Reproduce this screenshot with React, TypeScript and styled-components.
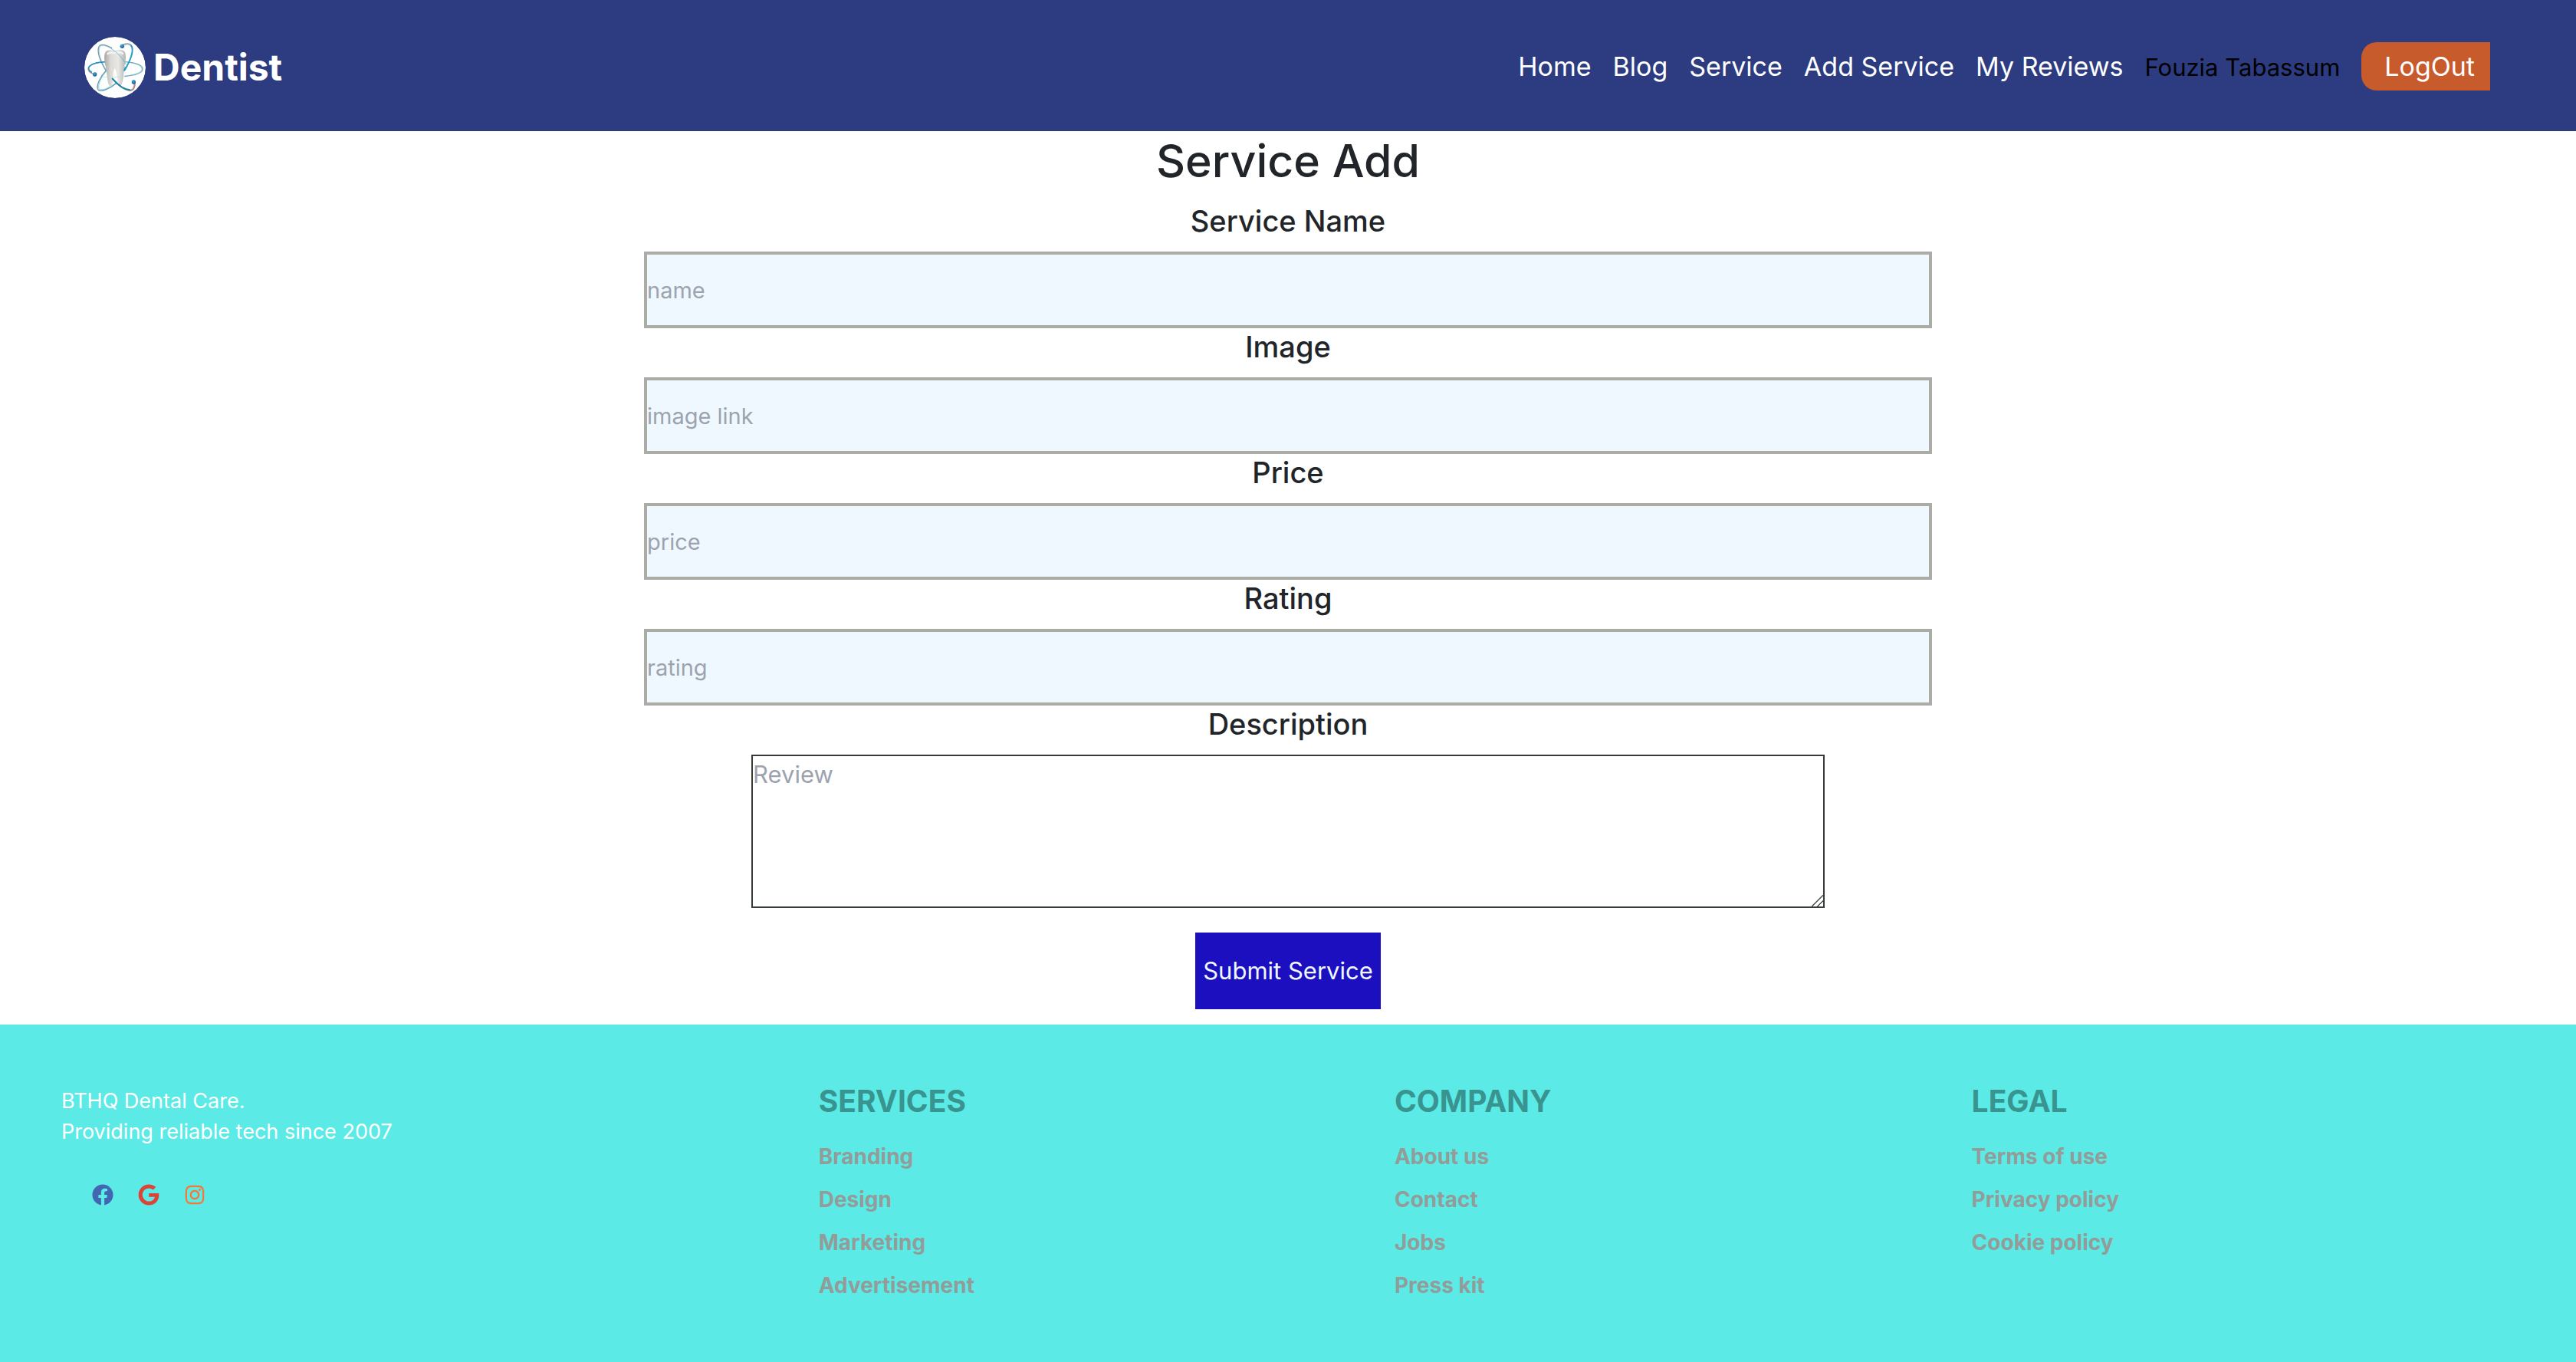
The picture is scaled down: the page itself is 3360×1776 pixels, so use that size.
import React from "react";
import styled, { createGlobalStyle } from "styled-components";
import { FaFacebook, FaGoogle, FaInstagram } from "react-icons/fa";

const GlobalStyle = createGlobalStyle`
  *, *::before, *::after { box-sizing: border-box; }
  body {
    margin: 0;
    background: #fff;
    color: #212529;
    font-family: Inter, "Liberation Sans", sans-serif;
    font-size: 31px;
    line-height: 48px;
  }
  a { color: inherit; text-decoration: none; }
`;

const Header = styled.header`
  display: flex;
  align-items: center;
  justify-content: space-between;
  padding: 44px 112px 43px 110px;
  background: #2d3c80;
  color: #fff;
`;

const Brand = styled.a`
  display: flex;
  align-items: center;
  gap: 10px;
  padding-top: 4px;
  font-size: 48px;
  font-weight: 700;
`;

const LogoMark = styled.svg`
  width: 80px;
  height: 80px;
  border-radius: 50%;
`;

const Nav = styled.nav`
  display: flex;
  align-items: baseline;
  gap: 28px;
  font-size: 34px;
  line-height: 43px;
`;

const UserName = styled.span`
  color: #000;
  font-size: 31px;
`;

const LogoutButton = styled.button`
  padding: 10px 20px 10px 30px;
  border: 0;
  border-radius: 20px 0 0 20px;
  background: #c75b2c;
  color: #fff;
  font: inherit;
`;

const Form = styled.form`
  display: flex;
  flex-direction: column;
  align-items: center;
  width: 50%;
  margin: 0 auto;
  padding-bottom: 20px;
`;

const Title = styled.h1`
  margin: 0 0 16px;
  font-size: 59px;
  line-height: 77px;
  font-weight: 500;
`;

const FieldLabel = styled.label`
  margin-bottom: 16px;
  font-size: 38px;
  line-height: 48px;
  font-weight: 500;
`;

const TextInput = styled.input`
  width: 100%;
  height: 100px;
  padding: 0;
  border: 4px solid #acaca6;
  border-radius: 0;
  background: #f0f8ff;
  color: inherit;
  font: inherit;
  font-size: 29px;
  &::placeholder { color: #9ca3af; opacity: 1; }
`;

const TextArea = styled.textarea`
  width: calc(100% * 5 / 6);
  height: 200px;
  margin-bottom: 32px;
  padding: 0;
  border: 2px solid #363c36;
  background: #fff;
  color: inherit;
  font: inherit;
  resize: both;
  &::placeholder { color: #9ca3af; opacity: 1; }
  &::-webkit-resizer {
    background: linear-gradient(
      135deg,
      transparent 46%,
      #555 48%,
      #555 53%,
      transparent 55%,
      transparent 71%,
      #555 73%,
      #555 78%,
      transparent 80%
    );
  }
`;

const SubmitButton = styled.button`
  height: 100px;
  padding: 0 10px;
  border: 0;
  background: #1c0fc0;
  color: #f0f8ff;
  font: inherit;
`;

const Footer = styled.footer`
  display: grid;
  grid-auto-flow: column;
  column-gap: 32px;
  padding: 80px;
  background: #5ceae7;
  font-size: 28px;
  line-height: 40px;
`;

const About = styled.div`
  padding-right: 8px;
  color: #fff;
`;

const AboutText = styled.p`
  margin: 0;
  font-size: 27px;
`;

const Socials = styled.div`
  display: flex;
  gap: 32px;
  padding: 48px 40px;
`;

const SocialLink = styled.a<{ $color: string }>`
  display: flex;
  justify-content: center;
  width: 28px;
  font-size: 28px;
  color: ${(p) => p.$color};
`;

const LinkColumn = styled.nav`
  display: flex;
  flex-direction: column;
  align-items: flex-start;
  gap: 16px;
  color: #929c98;
  font-weight: 700;
`;

const ColumnTitle = styled.h2`
  margin: 0 0 16px;
  color: #39938f;
  font-size: 39px;
  line-height: 40px;
  font-weight: 700;
`;

const navLinks = ["Home", "Blog", "Service", "Add Service", "My Reviews"];

const fields = [
  { id: "name", label: "Service Name", placeholder: "name" },
  { id: "image", label: "Image", placeholder: "image link" },
  { id: "price", label: "Price", placeholder: "price" },
  { id: "rating", label: "Rating", placeholder: "rating" },
];

const socials = [
  { name: "Facebook", color: "#4267b2", Icon: FaFacebook },
  { name: "Google", color: "#db4437", Icon: FaGoogle },
  { name: "Instagram", color: "#f77737", Icon: FaInstagram },
];

const footerColumns = [
  { title: "SERVICES", links: ["Branding", "Design", "Marketing", "Advertisement"] },
  { title: "COMPANY", links: ["About us", "Contact", "Jobs", "Press kit"] },
  { title: "LEGAL", links: ["Terms of use", "Privacy policy", "Cookie policy"] },
];

const ToothLogo = () => (
  <LogoMark viewBox="0 0 240 240" aria-hidden="true">
    <defs>
      <linearGradient id="tooth" x1="0" x2="1" y1="0" y2="0">
        <stop offset="0" stopColor="#a9a8a5" />
        <stop offset="0.3" stopColor="#dcdbd8" />
        <stop offset="0.65" stopColor="#e9e8e5" />
        <stop offset="1" stopColor="#b5b4b0" />
      </linearGradient>
      <radialGradient id="ball" cx="0.4" cy="0.35" r="0.7">
        <stop offset="0" stopColor="#4aa3dc" />
        <stop offset="1" stopColor="#0d5591" />
      </radialGradient>
    </defs>
    <circle cx="120" cy="120" r="120" fill="#fff" />
    <g fill="none" strokeLinecap="round">
      <path d="M160 98C205 101 231 113 228 129C225 144 190 152 158 155" stroke="#8ea9b0" strokeWidth="4" />
      <path d="M166 99C206 103 227 114 225 128C221 142 190 150 158 153" stroke="#4fc1dc" strokeWidth="2" />
      <path d="M84 131C62 96 47 56 58 37C66 25 89 33 107 44" stroke="#82989f" strokeWidth="4" />
      <path d="M86 130C66 98 51 58 61 40C67 30 84 35 101 43" stroke="#45b9d5" strokeWidth="1.5" />
      <path d="M88 128C62 155 44 194 54 207C64 219 100 203 128 180" stroke="#6f9dab" strokeWidth="4" />
      <path d="M88 133C64 158 50 192 58 204C68 213 98 200 126 178" stroke="#3dbbd8" strokeWidth="2" />
      <path d="M39 147C10 138 7 119 33 107C50 100 68 98 88 97" stroke="#d68b85" strokeWidth="4" />
      <path d="M28 138C9 126 16 114 36 106C52 100 68 98 86 98" stroke="#2297c4" strokeWidth="5" />
      <path d="M149 33C166 24 183 27 187 42C191 60 181 91 158 130" stroke="#2b9bc5" strokeWidth="6" />
      <path d="M151 31C163 26 174 27 180 34" stroke="#e2b0aa" strokeWidth="4" />
    </g>
    <path
      d="M80 66C85 48 103 51 119 54C136 49 154 47 160 63C166 86 157 111 155 134C153 158 151 188 138 194C127 192 134 148 119 122C108 143 116 190 103 195C89 188 91 155 86 129C82 106 75 88 80 66Z"
      fill="url(#tooth)"
    />
    <path d="M92 66C102 58 110 64 119 63C130 62 143 56 150 66" fill="none" stroke="#f3f2f0" strokeWidth="8" strokeLinecap="round" />
    <g fill="none" strokeLinecap="round">
      <path d="M101 43C130 61 151 86 163 108" stroke="#4dbad2" strokeWidth="2.5" />
      <path d="M70 157C101 158 132 158 158 154" stroke="#a8dfea" strokeWidth="2" />
      <path d="M160 120L156 132" stroke="#1b9ace" strokeWidth="5" />
      <path d="M110 164C133 190 158 209 180 210C195 207 197 196 197 183" stroke="#8d8583" strokeWidth="6" />
      <path d="M110 164C133 190 158 207 178 207" stroke="#1889ad" strokeWidth="5" />
      <path d="M198 186C197 197 193 204 187 207" stroke="#d7827c" strokeWidth="3" />
    </g>
    <circle cx="148" cy="37" r="8" fill="url(#ball)" />
    <circle cx="41" cy="147" r="8" fill="url(#ball)" />
    <circle cx="193" cy="177" r="8" fill="url(#ball)" />
  </LogoMark>
);

export default function App() {
  return (
    <>
      <GlobalStyle />
      <Header>
        <Brand href="#">
          <ToothLogo />
          Dentist
        </Brand>
        <Nav>
          {navLinks.map((link) => (
            <a key={link} href="#">{link}</a>
          ))}
          <UserName>Fouzia Tabassum</UserName>
          <LogoutButton type="button">LogOut</LogoutButton>
        </Nav>
      </Header>
      <main>
        <Form>
          <Title>Service Add</Title>
          {fields.map((field) => (
            <React.Fragment key={field.id}>
              <FieldLabel htmlFor={field.id}>{field.label}</FieldLabel>
              <TextInput id={field.id} type="text" placeholder={field.placeholder} />
            </React.Fragment>
          ))}
          <FieldLabel htmlFor="description">Description</FieldLabel>
          <TextArea id="description" placeholder="Review" />
          <SubmitButton type="submit">Submit Service</SubmitButton>
        </Form>
      </main>
      <Footer>
        <About>
          <AboutText>
            BTHQ Dental Care.
            <br />
            Providing reliable tech since 2007
          </AboutText>
          <Socials>
            {socials.map(({ name, color, Icon }) => (
              <SocialLink key={name} href="#" $color={color} aria-label={name}>
                <Icon />
              </SocialLink>
            ))}
          </Socials>
        </About>
        {footerColumns.map((column) => (
          <LinkColumn key={column.title}>
            <ColumnTitle>{column.title}</ColumnTitle>
            {column.links.map((link) => (
              <a key={link} href="#">{link}</a>
            ))}
          </LinkColumn>
        ))}
      </Footer>
    </>
  );
}
